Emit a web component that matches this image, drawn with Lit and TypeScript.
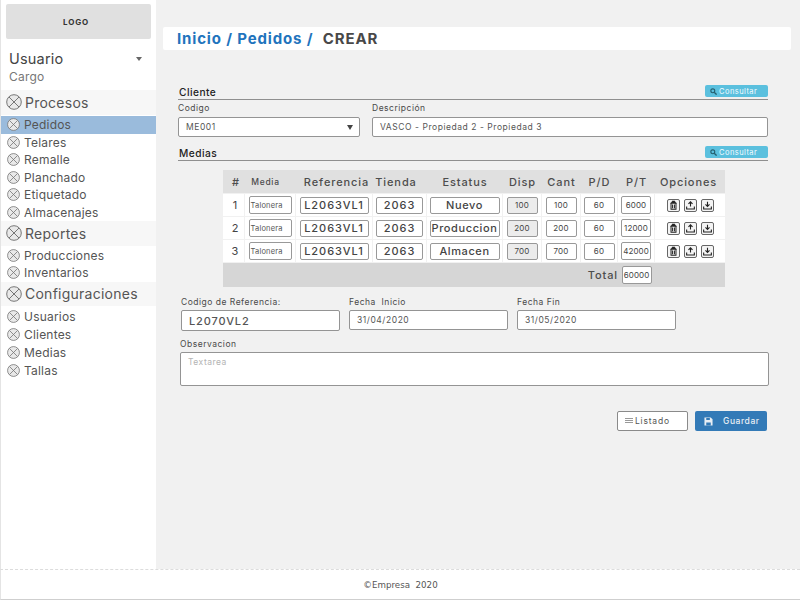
import { LitElement, html, css, svg } from "lit";
import { customElement } from "lit/decorators.js";

const MENU = [
  { title: "Procesos", items: ["Pedidos", "Telares", "Remalle", "Planchado", "Etiquetado", "Almacenajes"] },
  { title: "Reportes", items: ["Producciones", "Inventarios"] },
  { title: "Configuraciones", wide: true, items: ["Usuarios", "Clientes", "Medias", "Tallas"] },
];

const ROWS = [
  { n: 1, status: "Nuevo", disp: "100", pt: "6000" },
  { n: 2, status: "Produccion", disp: "200", pt: "12000" },
  { n: 3, status: "Almacen", disp: "700", pt: "42000" },
];

const xIcon = (size: number) => html`<svg class="x" width=${size} height=${size} viewBox="0 0 16 16">
  <circle cx="8" cy="8" r="7.3" fill="#e9e9e9" stroke="#777" stroke-width="1"></circle>
  <path d="M3 3 13 13M13 3 3 13" stroke="#777" stroke-width="1" fill="none"></path>
</svg>`;

const searchIcon = html`<svg width="7" height="7" viewBox="0 0 10 10">
  <circle cx="4" cy="4" r="2.8" fill="none" stroke="#25606f" stroke-width="1.6"></circle>
  <path d="M6 6 9.4 9.4" stroke="#25606f" stroke-width="1.9"></path>
</svg>`;

const trash = svg`<path d="M3.5 2.5h5M5 2.5V1.5h2v1M2.5 3.5h7M3.3 3.5v6.6h5.4V3.5M5 5v4M7 5v4" fill="none" stroke="#222" stroke-width="1.1"></path>`;
const upload = svg`<path d="M6 7V2.2M3.8 4.3 6 2l2.2 2.3" fill="none" stroke="#222" stroke-width="1.2"></path><path d="M1.8 7v2.8h8.4V7" fill="none" stroke="#222" stroke-width="1.2"></path>`;
const download = svg`<path d="M6 1.8v5M3.8 4.7 6 7l2.2-2.3" fill="none" stroke="#222" stroke-width="1.2"></path><path d="M1.8 7v2.8h8.4V7" fill="none" stroke="#222" stroke-width="1.2"></path>`;

@customElement("app-root")
export class AppRoot extends LitElement {
  static styles = css`
    :host {
      display: block;
      width: 800px;
      height: 600px;
      overflow: hidden;
      font-family: Inter, "Liberation Sans", sans-serif;
      color: #4a4a4a;
      background: #f1f1f1;
    }
    .shell { display: flex; height: 569px; }

    /* sidebar */
    .side {
      width: 156px;
      flex: none;
      background: #fff;
      box-sizing: border-box;
      border-left: 1px solid #e4e4e4;
      padding-top: 4px;
    }
    .logo {
      margin: 0 5px;
      height: 35px;
      padding-right: 5px;
      box-sizing: border-box;
      background: #e0e0e0;
      border-radius: 2px;
      display: flex;
      align-items: center;
      justify-content: center;
      font-size: 8px;
      font-weight: 700;
      letter-spacing: 0.8px;
      color: #333;
    }
    .user { height: 51px; box-sizing: border-box; padding: 11px 8px 0; position: relative; }
    .user .name { font-size: 14.5px; line-height: 18px; letter-spacing: 0.2px; color: #444; }
    .user .role { font-size: 12px; line-height: 18px; color: #777; letter-spacing: 0.2px; }
    .caret {
      position: absolute;
      right: 14px;
      top: 18px;
      border: 3.5px solid transparent;
      border-top: 4px solid #666;
    }
    .group {
      display: flex;
      align-items: center;
      gap: 3px;
      height: 24.5px;
      padding-left: 5px;
      background: #f7f7f7;
      font-size: 14px;
      letter-spacing: 0.25px;
      color: #555;
      box-sizing: border-box;
    }
    .items { padding-top: 1px; }
    .item {
      display: flex;
      align-items: center;
      gap: 4px;
      height: 17.5px;
      padding-left: 6px;
      font-size: 12px;
      letter-spacing: 0.2px;
      color: #555;
    }
    .items.wide .item { height: 18px; }
    .item.on { background: #9abbdc; height: 18px; }
    .x { flex: none; }

    /* main */
    .main { flex: 1; min-width: 0; padding: 27px 9px 0 7px; }
    .crumb {
      height: 23px;
      background: #fff;
      border-radius: 2px;
      display: flex;
      align-items: center;
      padding-left: 14px;
      font-size: 15px;
      font-weight: 700;
      letter-spacing: 0.85px;
      color: #1f74bd;
      white-space: pre;
    }
    .crumb span { color: #484848; margin-left: 5px; }
    .form { padding: 35px 23px 0 15px; }
    .head {
      display: flex;
      justify-content: space-between;
      align-items: flex-end;
      border-bottom: 1px solid #8f8f8f;
      height: 14px;
      font-size: 10.2px;
      font-weight: 500;
      letter-spacing: 0.45px;
      color: #222;
      line-height: 13px;
      padding-left: 1px;
    }
    .btn-info {
      display: flex;
      align-items: center;
      gap: 2px;
      width: 63px;
      height: 12px;
      margin-bottom: 2px;
      padding-left: 5px;
      box-sizing: border-box;
      background: #5bc0de;
      border-radius: 2px;
      color: #f2fbff;
      font-size: 7.5px;
      font-weight: 400;
      letter-spacing: 0.45px;
    }
    .client { display: flex; gap: 12px; margin: 2px 0 9px; }
    .client .f1 { width: 182px; }
    .client .f2 { flex: 1; }
    label {
      display: block;
      font-size: 8.5px;
      line-height: 12px;
      letter-spacing: 0.5px;
      color: #4a4a4a;
      margin-bottom: 3px;
    }
    .box {
      background: #fff;
      border: 1px solid #949494;
      border-radius: 2px;
      box-sizing: border-box;
      height: 20px;
      display: flex;
      align-items: center;
      padding-left: 7px;
      font-size: 8.5px;
      letter-spacing: 0.55px;
      color: #555;
      position: relative;
    }
    .arrow {
      position: absolute;
      right: 6px;
      top: 7px;
      border: 3px solid transparent;
      border-top: 5px solid #444;
      border-bottom: none;
    }

    /* table */
    .table { margin: 9px 43px 0 45px; }
    .row {
      display: grid;
      grid-template-columns: 22px 51px 77px 54px 76px 39px 39px 37px 37px 71px;
      align-items: center;
    }
    .row.th {
      height: 23px;
      background: #e0e0e0;
      font-size: 11px;
      font-weight: 500;
      letter-spacing: 0.9px;
      color: #4d4d4d;
      text-align: center;
      margin-bottom: 1px;
    }
    .row.th .hash { padding-left: 4px; }
    .row.th .small { font-size: 8.5px; letter-spacing: 0.7px; padding-right: 10px; }
    .row.th .ref-h { padding-left: 4px; }
    .row.th .tienda-h { padding-right: 8px; }
    .row.th .ops-h { padding-right: 4px; }
    .row.td { height: 22px; background: #fff; margin-bottom: 1px; }
    .row.td > div { display: flex; justify-content: center; align-items: center; height: 100%; border-right: 1px solid #f1f1f1; box-sizing: border-box; }
    .row.td > div:last-child { border-right: none; }
    .num { font-size: 11px; color: #444; }
    .row.td > .num { padding-left: 3px; }
    .cell {
      background: #fff;
      border: 1px solid #999;
      border-radius: 2px;
      box-sizing: border-box;
      height: 17px;
      display: flex;
      align-items: center;
      justify-content: center;
      font-size: 8px;
      letter-spacing: 0.25px;
      color: #444;
      white-space: nowrap;
      overflow: hidden;
    }
    .cell.media { width: 43px; height: 18px; font-size: 7.5px; letter-spacing: 0.2px; justify-content: flex-start; padding-left: 1px; color: #555; }
    .cell.big { font-size: 11px; font-weight: 500; letter-spacing: 0.95px; }
    .cell.ref { width: 69px; }
    .cell.tienda { width: 47px; }
    .cell.status { width: 70px; letter-spacing: 0.6px; }
    .cell.num5 { width: 31px; }
    .cell.disp { background: #ececec; }
    .cell.pt { width: 30px; height: 18px; letter-spacing: 0.1px; }
    .cell.total-v { justify-self: center; }
    .ops { gap: 4px; }
    .op {
      width: 13px;
      height: 13px;
      border: 1px solid #666;
      border-radius: 2px;
      box-sizing: border-box;
      background: #f4f4f4;
      display: flex;
      align-items: center;
      justify-content: center;
    }
    .row.total { height: 24px; background: #d6d6d6; }
    .total-l {
      grid-column: 1 / 9;
      text-align: right;
      font-size: 11px;
      font-weight: 500;
      letter-spacing: 0.9px;
      color: #4d4d4d;
    }

    /* lower form */
    .lower { display: flex; gap: 9px; margin: 9px 0 0 3px; }
    .lower > div { width: 159px; }
    .lower label { margin-bottom: 2px; }
    .lower .code { font-size: 11px; font-weight: 500; letter-spacing: 0.85px; height: 21px; }
    .obs { margin: 7px -1px 0 2px; }
    .obs label { margin-bottom: 2px; }
    .area {
      height: 34px;
      background: #fff;
      border: 1px solid #949494;
      border-radius: 2px;
      box-sizing: border-box;
      padding: 4px 7px;
      font-size: 8.5px;
      letter-spacing: 0.5px;
      color: #b4b4b4;
    }
    .actions { display: flex; justify-content: flex-end; gap: 7px; margin: 25px 1px 0 0; }
    .btn {
      height: 20px;
      box-sizing: border-box;
      border-radius: 2px;
      display: flex;
      align-items: center;
      font-size: 8.5px;
      letter-spacing: 0.55px;
    }
    .btn.list { width: 71px; background: #fff; border: 1px solid #8a8a8a; color: #555; padding-left: 7px; gap: 2px; letter-spacing: 0.8px; }
    .btn.save { width: 72px; background: #337ab7; color: #e8eef4; padding-left: 9px; gap: 10px; font-weight: 500; }

    /* footer */
    footer {
      height: 31px;
      box-sizing: border-box;
      background: #fff;
      border-top: 1px dashed #dcdcdc;
      border-bottom: 1px solid #cfcfcf;
      border-left: 1px solid #e4e4e4;
      display: flex;
      align-items: center;
      justify-content: center;
      font-family: "DejaVu Sans", sans-serif;
      font-size: 8.7px;
      color: #555;
      white-space: pre;
    }
  `;

  renderSide() {
    return html`<aside class="side">
      <div class="logo">LOGO</div>
      <div class="user">
        <div class="name">Usuario</div>
        <div class="role">Cargo</div>
        <i class="caret"></i>
      </div>
      ${MENU.map(
        (g) => html`<div class="group">${xIcon(16)}${g.title}</div>
          <div class="items ${g.wide ? "wide" : ""}">
            ${g.items.map(
              (i) => html`<div class="item ${i === "Pedidos" ? "on" : ""}">${xIcon(13)}${i}</div>`
            )}
          </div>`
      )}
    </aside>`;
  }

  renderRow(r: (typeof ROWS)[number]) {
    return html`<div class="row td">
      <div class="num">${r.n}</div>
      <div><span class="cell media">Talonera</span></div>
      <div><span class="cell big ref">L2063VL1</span></div>
      <div><span class="cell big tienda">2063</span></div>
      <div><span class="cell big status">${r.status}</span></div>
      <div><span class="cell num5 disp">${r.disp}</span></div>
      <div><span class="cell num5">${r.disp}</span></div>
      <div><span class="cell num5">60</span></div>
      <div><span class="cell pt">${r.pt}</span></div>
      <div class="ops">
        ${[trash, upload, download].map(
          (p) => html`<span class="op"><svg width="11" height="11" viewBox="0 0 12 12">${p}</svg></span>`
        )}
      </div>
    </div>`;
  }

  render() {
    return html`<div class="shell">
        ${this.renderSide()}
        <main class="main">
          <div class="crumb">Inicio / Pedidos / <span>CREAR</span></div>
          <div class="form">
            <div class="head">Cliente<span class="btn-info">${searchIcon}Consultar</span></div>
            <div class="client">
              <div class="f1">
                <label>Codigo</label>
                <div class="box">ME001<i class="arrow"></i></div>
              </div>
              <div class="f2">
                <label>Descripción</label>
                <div class="box">VASCO - Propiedad 2 - Propiedad 3</div>
              </div>
            </div>
            <div class="head">Medias<span class="btn-info">${searchIcon}Consultar</span></div>
            <div class="table">
              <div class="row th">
                <div class="hash">#</div><div class="small">Media</div><div class="ref-h">Referencia</div><div class="tienda-h">Tienda</div><div>Estatus</div>
                <div>Disp</div><div>Cant</div><div>P/D</div><div>P/T</div><div class="ops-h">Opciones</div>
              </div>
              ${ROWS.map((r) => this.renderRow(r))}
              <div class="row total">
                <div class="total-l">Total</div>
                <span class="cell pt total-v">60000</span>
              </div>
            </div>
            <div class="lower">
              <div><label>Codigo de Referencia:</label><div class="box code">L2070VL2</div></div>
              <div><label>Fecha&nbsp; Inicio</label><div class="box">31/04/2020</div></div>
              <div><label>Fecha Fin</label><div class="box">31/05/2020</div></div>
            </div>
            <div class="obs">
              <label>Observacion</label>
              <div class="area">Textarea</div>
            </div>
            <div class="actions">
              <div class="btn list">
                <svg width="8" height="6" viewBox="0 0 8 6"><path d="M0 .5h8M0 2.5h8M0 4.5h8" stroke="#999" stroke-width="1"></path></svg>
                Listado
              </div>
              <div class="btn save">
                <svg width="9" height="9" viewBox="0 0 10 10">
                  <path d="M.5.5h7l2 2v7H.5z" fill="#e8eef4"></path>
                  <path d="M2.5 1h4v2.4h-4zM2.5 6h5v3.5h-5z" fill="#337ab7"></path>
                </svg>
                Guardar
              </div>
            </div>
          </div>
        </main>
      </div>
      <footer>©Empresa  2020</footer>`;
  }
}
